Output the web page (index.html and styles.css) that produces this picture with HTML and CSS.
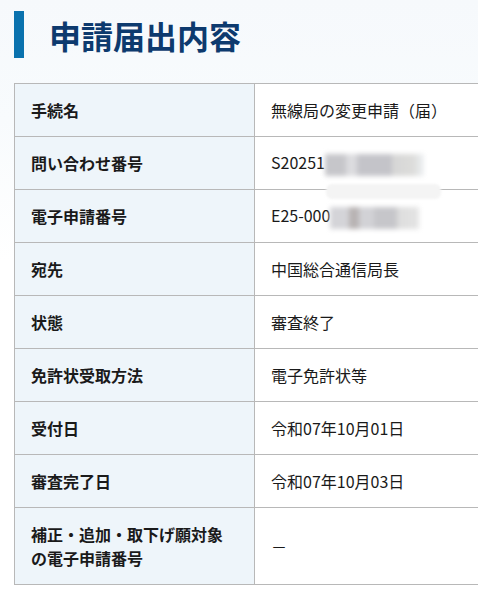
FILE: index.html
```html
<!DOCTYPE html>
<html lang="ja">
<head>
<meta charset="utf-8">
<link rel="stylesheet" href="styles.css">
</head>
<body>
<div class="page">
  <h1 class="title">申請届出内容</h1>
  <table class="info">
    <tr><th>手続名</th><td>無線局の変更申請（届）</td></tr>
    <tr><th>問い合わせ番号</th><td class="rel">S20251<span class="redact redact-s"></span><span class="band"></span></td></tr>
    <tr><th>電子申請番号</th><td>E25-000<span class="redact redact-e"></span></td></tr>
    <tr><th>宛先</th><td>中国総合通信局長</td></tr>
    <tr><th>状態</th><td>審査終了</td></tr>
    <tr><th>免許状受取方法</th><td>電子免許状等</td></tr>
    <tr><th>受付日</th><td>令和07年10月01日</td></tr>
    <tr><th>審査完了日</th><td>令和07年10月03日</td></tr>
    <tr class="tall"><th>補正・追加・取下げ願対象<br>の電子申請番号</th><td>－</td></tr>
  </table>
</div>
</body>
</html>
```
FILE: styles.css
```css
html, body {
  margin: 0;
  padding: 0;
  overflow: hidden;
}
body {
  width: 478px;
  height: 610px;
  background: linear-gradient(to bottom, #f6f9fc 0px, #f8fbfd 120px, #ffffff 260px);
  font-family: "Noto Sans CJK JP", "Noto Sans", sans-serif;
  color: #1a1a1a;
}
.page {
  padding: 11px 0 0 14px;
}
.title {
  margin: 0;
  height: 47px;
  display: flex;
  align-items: center;
  border-left: 10px solid #0a72ae;
  padding-left: 25px;
  font-size: 32px;
  font-weight: 700;
  color: #0d3a6e;
  line-height: 1;
}
.info {
  margin-top: 25px;
  border-collapse: collapse;
  width: 540px;
  font-size: 16px;
  line-height: 24px;
}
.info tr {
  height: 53px;
}
.info tr.tall {
  height: 77px;
}
.info th, .info td {
  border: 1px solid #b8b8b8;
  padding: 0 16px;
  text-align: left;
  vertical-align: middle;
}
.info th {
  width: 207px;
  background: #eef5fa;
  font-weight: 700;
}
.info td {
  background: #ffffff;
  font-weight: 400;
}
.rel {
  position: relative;
}
.redact {
  display: inline-block;
  vertical-align: middle;
  height: 22px;
  filter: blur(2.5px);
}
.redact-s {
  width: 99px;
  background: linear-gradient(to right,
    #c6c6ca 0px, #c6c6ca 21px,
    #dcdcdf 21px, #dcdcdf 32px,
    #c4c4c9 32px, #c4c4c9 67px,
    #d6d6d6 67px, #dcdcda 88px,
    #eef1f4 99px);
}
.redact-e {
  width: 89px;
  background: linear-gradient(to right,
    #d4d4d8 0px, #d4d4d8 19px,
    #b8b3b3 19px, #b8b3b3 29px,
    #d2d2d6 29px, #d2d2d6 44px,
    #c6c6ca 44px, #c6c6ca 67px,
    #dddddd 67px, #e4e4e4 89px);
}
.band {
  position: absolute;
  left: 71px;
  bottom: -10px;
  width: 115px;
  height: 15px;
  background: #f4f4f4;
  border-radius: 6px;
  filter: blur(1px);
}
```
